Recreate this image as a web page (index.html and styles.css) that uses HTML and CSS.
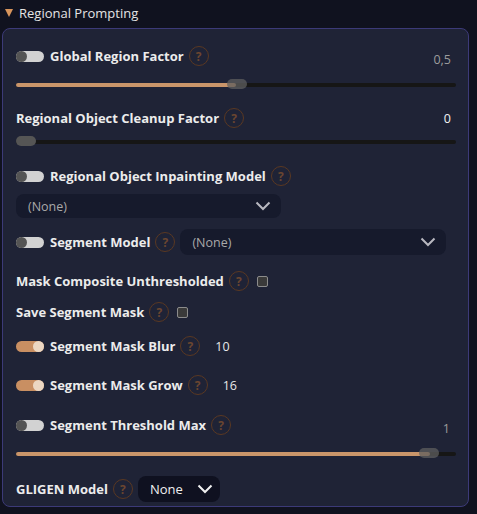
FILE: index.html
```html
<!DOCTYPE html>
<html lang="en">
<head>
  <meta charset="UTF-8" />
  <title>Regional Prompting</title>
  <link rel="stylesheet" href="styles.css">
</head>
<body>
  <div class="section-title">
    <span class="caret"></span>
    <span>Regional Prompting</span>
  </div>

  <div class="panel">
    <div class="row r1">
      <span class="toggle"></span>
      <span class="label">Global Region Factor</span>
      <span class="help">?</span>
      <span class="value muted">0,5</span>
    </div>
    <div class="slider s1">
      <div class="fill" style="width: 50%"></div>
      <div class="thumb" style="left: 48%"></div>
    </div>

    <div class="row r2">
      <span class="label">Regional Object Cleanup Factor</span>
      <span class="help">?</span>
      <span class="value">0</span>
    </div>
    <div class="slider s2">
      <div class="thumb dark" style="left: 0%"></div>
    </div>

    <div class="row r3">
      <span class="toggle"></span>
      <span class="label">Regional Object Inpainting Model</span>
      <span class="help">?</span>
    </div>
    <div class="select wide">
      <span>(None)</span>
      <svg class="chev" width="16" height="10" viewBox="0 0 16 10"><path d="M1.5 1.5 L8 8 L14.5 1.5" fill="none" stroke="currentColor" stroke-width="2"/></svg>
    </div>

    <div class="row r4">
      <span class="toggle"></span>
      <span class="label">Segment Model</span>
      <span class="help">?</span>
      <div class="select grow">
        <span>(None)</span>
        <svg class="chev" width="16" height="10" viewBox="0 0 16 10"><path d="M1.5 1.5 L8 8 L14.5 1.5" fill="none" stroke="currentColor" stroke-width="2"/></svg>
      </div>
    </div>

    <div class="row r5">
      <span class="label">Mask Composite Unthresholded</span>
      <span class="help">?</span>
      <span class="check"></span>
    </div>

    <div class="row r6">
      <span class="label">Save Segment Mask</span>
      <span class="help">?</span>
      <span class="check"></span>
    </div>

    <div class="row r7">
      <span class="toggle on"></span>
      <span class="label">Segment Mask Blur</span>
      <span class="help">?</span>
      <span class="num">10</span>
    </div>

    <div class="row r8">
      <span class="toggle on"></span>
      <span class="label">Segment Mask Grow</span>
      <span class="help">?</span>
      <span class="num">16</span>
    </div>

    <div class="row r9">
      <span class="toggle"></span>
      <span class="label">Segment Threshold Max</span>
      <span class="help">?</span>
      <span class="value muted low">1</span>
    </div>
    <div class="slider s3">
      <div class="fill" style="width: 94%"></div>
      <div class="thumb" style="left: 91.5%"></div>
    </div>

    <div class="row r10">
      <span class="label">GLIGEN Model</span>
      <span class="help">?</span>
      <div class="select small">
        <span>None</span>
        <svg class="chev" width="16" height="10" viewBox="0 0 16 10"><path d="M1.5 1.5 L8 8 L14.5 1.5" fill="none" stroke="currentColor" stroke-width="2"/></svg>
      </div>
    </div>
  </div>
</body>
</html>
```

FILE: styles.css
```css
* {
  box-sizing: border-box;
}

body {
  margin: 0;
  background-color: #10121f;
  font-family: "Open Sans", "Noto Sans", sans-serif;
  color: #e6e6e6;
  width: 477px;
  height: 514px;
  overflow: hidden;
}

.section-title {
  display: flex;
  align-items: center;
  gap: 6px;
  height: 28px;
  padding-left: 5px;
  padding-bottom: 2px;
  font-size: 13px;
  color: #e4e4e4;
}

.caret {
  width: 0;
  height: 0;
  border-left: 4px solid transparent;
  border-right: 4px solid transparent;
  border-top: 8px solid #d8955c;
}

.panel {
  margin-left: 2px;
  width: 467px;
  height: 479px;
  background-color: #1f2336;
  border: 1px solid #3c3a78;
  border-radius: 8px;
  padding: 17px 12px 0 13px;
  display: flex;
  flex-direction: column;
}

.row {
  display: flex;
  align-items: center;
  height: 20px;
}

.label {
  font-weight: bold;
  font-size: 13px;
  color: #ececec;
  white-space: nowrap;
}

.toggle {
  position: relative;
  width: 28px;
  height: 11px;
  border-radius: 6px;
  background-color: #d2d2d2;
  margin-right: 6px;
  flex-shrink: 0;
}

.toggle::after {
  content: "";
  position: absolute;
  left: 0;
  top: 0;
  width: 11px;
  height: 11px;
  border-radius: 50%;
  background-color: #545454;
}

.toggle.on {
  background-color: #c98f62;
}

.toggle.on::after {
  left: auto;
  right: 0;
  background-color: #ecd7c2;
}

.help {
  width: 20px;
  height: 20px;
  border-radius: 50%;
  border: 1.5px solid #5a3822;
  color: #6b4630;
  font-size: 12px;
  font-weight: bold;
  display: flex;
  align-items: center;
  justify-content: center;
  margin-left: 5px;
  flex-shrink: 0;
}

.value {
  margin-left: auto;
  margin-right: 5px;
  font-size: 12.5px;
  color: #f2f2f2;
}

.value.muted {
  color: #9c9c9c;
  padding-top: 6px;
}

.value.low {
  padding-top: 6px;
  margin-right: 6px;
}

.num {
  margin-left: 15px;
  font-size: 12.5px;
  color: #e8e8e8;
}

.check {
  width: 11px;
  height: 11px;
  border: 1.5px solid #8c8c8c;
  background-color: #3a3a3a;
  border-radius: 2px;
  margin-left: 8px;
}

.slider {
  position: relative;
  height: 10px;
  width: 440px;
}

.slider::before {
  content: "";
  position: absolute;
  left: 0;
  right: 0;
  top: 4px;
  height: 4px;
  border-radius: 2px;
  background-color: #161616;
}

.slider .fill {
  position: absolute;
  left: 0;
  top: 4px;
  height: 4px;
  border-radius: 2px;
  background-color: #c9956a;
}

.slider .thumb {
  position: absolute;
  top: 0;
  width: 20px;
  height: 10px;
  border-radius: 5px;
  background-color: rgba(95, 95, 95, 0.75);
}

.slider .thumb.dark {
  background-color: #555555;
}

.select {
  display: flex;
  align-items: center;
  justify-content: space-between;
  background-color: #161a2c;
  border-radius: 8px;
  font-size: 12.5px;
  color: #a9a9a9;
  padding: 0 10px 0 12px;
}

.select .chev {
  color: #b8b8c0;
}

.select.wide {
  width: 265px;
  height: 24px;
}

.select.grow {
  margin-left: 5px;
  width: 266px;
  height: 26px;
}

.select.small {
  margin-left: 5px;
  width: 82px;
  height: 26px;
  background-color: #0f1120;
  color: #f0f0f0;
  font-size: 13px;
  padding: 0 7px 0 12px;
}

.select.small .chev {
  color: #f0f0f0;
}

.s1 { margin-top: 13px; }
.r2 { margin-top: 19px; }
.s2 { margin-top: 8px; }
.r3 { margin-top: 20px; }
.wide { margin-top: 8px; }
.r4 { margin-top: 11px; height: 26px; }
.r5 { margin-top: 16px; }
.r6 { margin-top: 11px; }
.r7 { margin-top: 14px; }
.r8 { margin-top: 19px; }
.r9 { margin-top: 20px; }
.s3 { margin-top: 13px; }
.r10 { margin-top: 18px; height: 26px; }
```
